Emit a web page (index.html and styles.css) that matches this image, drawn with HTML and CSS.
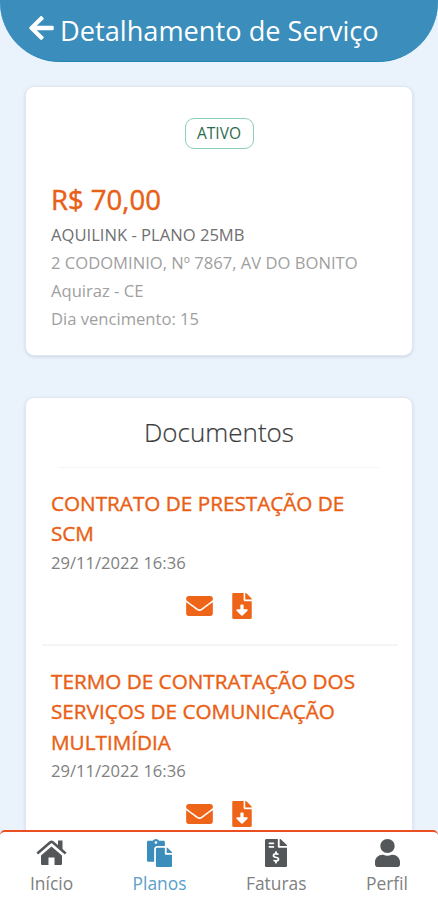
FILE: index.html
```html
<!DOCTYPE html>
<html lang="pt-BR">
<head>
  <meta charset="UTF-8">
  <meta name="viewport" content="width=device-width, initial-scale=1.0">
  <title>Detalhamento de Serviço</title>
  <link rel="stylesheet" href="styles.css">
</head>
<body>
  <header class="topbar">
    <svg class="back" viewBox="0 0 448 512"><path d="M257.500 445.100l-22.200 22.200c-9.400 9.400-24.600 9.400-33.900 0L7 273c-9.400-9.400-9.400-24.600 0-33.900L201.400 44.700c9.400-9.400 24.600-9.400 33.900 0l22.200 22.200c9.500 9.500 9.300 25-.4 34.300L136.600 216H424c13.300 0 24 10.700 24 24v32c0 13.300-10.700 24-24 24H136.600l120.500 114.800c9.800 9.300 10 24.800.4 34.300z"/></svg>
    <h1>Detalhamento de Serviço</h1>
  </header>

  <main class="content">
    <section class="card plan">
      <span class="badge">ATIVO</span>
      <h2 class="price">R$ 70,00</h2>
      <p class="plan-name">AQUILINK - PLANO 25MB</p>
      <p>2 CODOMINIO, Nº 7867, AV DO BONITO</p>
      <p>Aquiraz - CE</p>
      <p>Dia vencimento: 15</p>
    </section>

    <section class="card docs">
      <h2 class="docs-title">Documentos</h2>
      <article class="doc">
        <h3>CONTRATO DE PRESTAÇÃO DE SCM</h3>
        <time>29/11/2022 16:36</time>
        <div class="actions">
          <svg class="mail" viewBox="0 0 512 384"><path d="M502.300 126.800c3.900-3.100 9.700-.2 9.700 4.700V336c0 26.500-21.500 48-48 48H48c-26.500 0-48-21.500-48-48V131.600c0-5 5.700-7.800 9.700-4.700 22.400 17.400 52.100 39.500 154.100 113.600 21.100 15.400 56.700 47.800 92.200 47.600 35.700.3 72-32.800 92.300-47.600 102-74.100 131.600-96.300 154-113.700zM256 256c23.200.4 56.600-29.200 73.400-41.400 132.700-96.300 142.800-104.700 173.400-128.700 5.800-4.500 9.200-11.500 9.200-18.900V48c0-26.500-21.500-48-48-48H48C21.500 0 0 21.500 0 48v19c0 7.400 3.400 14.300 9.200 18.900 30.600 23.900 40.700 32.400 173.400 128.700 16.800 12.200 50.200 41.800 73.400 41.400z"/></svg>
          <svg class="download" viewBox="0 0 384 512"><path d="M224 136V0H24C10.700 0 0 10.700 0 24v464c0 13.300 10.700 24 24 24h336c13.300 0 24-10.700 24-24V160H248c-13.200 0-24-10.800-24-24zm76.450 211.360l-96.420 95.700c-6.650 6.610-17.390 6.610-24.040 0l-96.420-95.700C73.420 337.290 80.540 320 94.820 320H160v-80c0-8.840 7.160-16 16-16h32c8.840 0 16 7.160 16 16v80h65.180c14.280 0 21.400 17.290 11.270 27.360zM377 105L279.100 7c-4.500-4.500-10.600-7-17-7H256v128h128v-6.100c0-6.300-2.500-12.400-7-16.900z"/></svg>
        </div>
      </article>
      <article class="doc">
        <h3>TERMO DE CONTRATAÇÃO DOS SERVIÇOS DE COMUNICAÇÃO MULTIMÍDIA</h3>
        <time>29/11/2022 16:36</time>
        <div class="actions">
          <svg class="mail" viewBox="0 0 512 384"><path d="M502.300 126.800c3.900-3.100 9.700-.2 9.700 4.700V336c0 26.500-21.500 48-48 48H48c-26.500 0-48-21.500-48-48V131.600c0-5 5.700-7.800 9.700-4.700 22.400 17.400 52.100 39.500 154.100 113.600 21.100 15.400 56.700 47.800 92.200 47.600 35.700.3 72-32.800 92.300-47.600 102-74.100 131.600-96.300 154-113.700zM256 256c23.200.4 56.600-29.200 73.400-41.400 132.700-96.300 142.800-104.700 173.400-128.700 5.800-4.500 9.200-11.500 9.200-18.900V48c0-26.500-21.500-48-48-48H48C21.500 0 0 21.500 0 48v19c0 7.400 3.400 14.300 9.200 18.900 30.600 23.900 40.700 32.400 173.400 128.700 16.800 12.200 50.200 41.800 73.400 41.400z"/></svg>
          <svg class="download" viewBox="0 0 384 512"><path d="M224 136V0H24C10.700 0 0 10.700 0 24v464c0 13.300 10.700 24 24 24h336c13.300 0 24-10.700 24-24V160H248c-13.200 0-24-10.800-24-24zm76.450 211.360l-96.420 95.700c-6.650 6.610-17.390 6.610-24.040 0l-96.420-95.700C73.420 337.290 80.540 320 94.820 320H160v-80c0-8.840 7.160-16 16-16h32c8.840 0 16 7.160 16 16v80h65.180c14.280 0 21.400 17.290 11.270 27.360zM377 105L279.100 7c-4.500-4.500-10.600-7-17-7H256v128h128v-6.100c0-6.300-2.500-12.400-7-16.900z"/></svg>
        </div>
      </article>
    </section>
  </main>

  <nav class="tabbar">
    <a class="tab">
      <svg width="31" height="28" viewBox="0 0 31 28"><path d="M15.500 7.500L26 16.500V25a1 1 0 0 1-1 1h-6.500v-7.500h-6V26H6a1 1 0 0 1-1-1v-8.500z"/><path d="M1.300 14.500L14.300 3.300q1.200-1 2.400 0L29.700 14.500" fill="none" stroke="currentColor" stroke-width="2.600"/><path d="M22 1.500h4.500V11L22 7z"/></svg>
      <span>Início</span>
    </a>
    <a class="tab active">
      <svg width="25" height="28" viewBox="0 0 448 512" preserveAspectRatio="none"><path d="M128 184c0-30.900 25.100-56 56-56h136V56c0-13.300-10.700-24-24-24h-80.600C204.300 12.900 183.600 0 160 0s-44.300 12.900-55.400 32H24C10.700 32 0 42.700 0 56v336c0 13.300 10.700 24 24 24h104V184zm32-144c13.300 0 24 10.700 24 24s-10.700 24-24 24-24-10.700-24-24 10.700-24 24-24zm184 248h104v200c0 13.300-10.700 24-24 24H184c-13.300 0-24-10.700-24-24V184c0-13.300 10.700-24 24-24h136v104c0 13.200 10.800 24 24 24zm104-38.100v6.100h-96v-96h6.100c6.400 0 12.500 2.500 17 7l65.900 65.900c4.500 4.500 7 10.600 7 17z"/></svg>
      <span>Planos</span>
    </a>
    <a class="tab">
      <svg width="22" height="28" viewBox="0 0 384 512" preserveAspectRatio="none"><path d="M377 105L279.100 7c-4.500-4.500-10.600-7-17-7H256v128h128v-6.100c0-6.300-2.500-12.400-7-16.900zm-153 31V0H24C10.700 0 0 10.700 0 24v464c0 13.300 10.700 24 24 24h336c13.300 0 24-10.700 24-24V160H248c-13.200 0-24-10.800-24-24zM64 72c0-4.400 3.600-8 8-8h80c4.400 0 8 3.600 8 8v16c0 4.400-3.600 8-8 8H72c-4.400 0-8-3.600-8-8V72zm0 80v-16c0-4.400 3.600-8 8-8h80c4.400 0 8 3.600 8 8v16c0 4.400-3.600 8-8 8H72c-4.400 0-8-3.600-8-8zm144 263.900V440c0 4.400-3.600 8-8 8h-16c-4.400 0-8-3.600-8-8v-24.300c-11.300-.6-22.300-4.500-31.400-11.300-3.900-2.900-4.100-8.800-.6-12.100l11.800-11.200c2.800-2.600 6.900-2.800 10.100-.7 3.900 2.400 8.300 3.700 12.800 3.700h28.100c6.500 0 11.800-5.900 11.800-13.200 0-6-3.600-11.200-8.800-12.700l-45-13.500c-18.600-5.600-31.600-23.400-31.600-43.400 0-24.500 19.100-44.400 42.700-45.100V232c0-4.400 3.600-8 8-8h16c4.400 0 8 3.600 8 8v24.300c11.300.6 22.300 4.500 31.400 11.300 3.900 2.900 4.100 8.800.6 12.100l-11.800 11.200c-2.800 2.600-6.900 2.800-10.100.7-3.900-2.400-8.300-3.700-12.800-3.700h-28.100c-6.500 0-11.800 5.900-11.800 13.200 0 6 3.600 11.200 8.800 12.700l45 13.500c18.600 5.600 31.600 23.400 31.600 43.400 0 24.500-19 44.400-42.700 45.100z"/></svg>
      <span>Faturas</span>
    </a>
    <a class="tab">
      <svg width="25" height="28" viewBox="0 0 448 512" preserveAspectRatio="none"><path d="M224 256c70.700 0 128-57.300 128-128S294.700 0 224 0 96 57.300 96 128s57.300 128 128 128zm89.600 32h-16.700c-22.200 10.200-46.900 16-72.900 16s-50.600-5.800-72.900-16h-16.700C60.200 288 0 348.200 0 422.400V464c0 26.500 21.500 48 48 48h352c26.500 0 48-21.500 48-48v-41.600c0-74.200-60.200-134.400-134.400-134.400z"/></svg>
      <span>Perfil</span>
    </a>
  </nav>
</body>
</html>
```
FILE: styles.css
```css
* {
  box-sizing: border-box;
  margin: 0;
}
body {
  height: 100vh;
  overflow: hidden;
  background: #eaf2fc;
  color: #a0a0a0;
  font-family: 'Open Sans', 'Noto Sans', sans-serif;
  font-size: 16.6px;
}
svg {
  display: block;
  flex-shrink: 0;
  fill: currentColor;
}
.topbar {
  display: flex;
  height: 62px;
  padding: 0 29px;
  background: #3b8dbc;
  border-bottom: 1px solid #2585b5;
  border-radius: 0 0 60px 60px;
  color: #fff;
}
.back {
  width: 25px;
  height: 28px;
  margin: 14px 6px 0 0;
}
h1 {
  font-size: 27.2px;
  font-weight: 400;
  line-height: 61px;
  white-space: nowrap;
}
.content {
  padding: 24px 25px 0;
}
.card {
  background: #fff;
  border: 1px solid #e1e8f0;
  border-radius: 9px;
  box-shadow: 0 1px 3px rgba(60, 90, 110, 0.18);
}
.plan {
  display: flex;
  flex-direction: column;
  height: 270px;
  margin-bottom: 41px;
  padding: 31px 25px 0;
  line-height: 28px;
}
.badge {
  align-self: center;
  width: 69px;
  height: 31px;
  border: 1px solid #8ccfb2;
  border-radius: 9px;
  color: #2b6b4d;
  font-size: 15.5px;
  line-height: 29px;
  text-align: center;
}
.price {
  margin: 32px 0 2px;
  color: #ea5f16;
  font-size: 27.5px;
  font-weight: 400;
  line-height: 38px;
  -webkit-text-stroke: 0.5px;
}
.plan-name {
  color: #707070;
}
.docs {
  height: 480px;
}
.docs-title {
  height: 70px;
  margin: 0 33px;
  border-bottom: 1px solid #f4f4f4;
  color: #3c3d40;
  font-size: 26px;
  font-weight: 300;
  line-height: 69px;
  text-align: center;
  -webkit-text-stroke: 0.2px;
}
.doc {
  margin: 0 14px 0 16px;
  padding: 20px 9px 25px;
  border-bottom: 2px solid #f5f5f5;
}
h3 {
  color: #ea5f16;
  font-size: 20.7px;
  font-weight: 400;
  line-height: 30.400px;
  -webkit-text-stroke: 0.4px;
}
time {
  display: block;
  color: #808080;
  line-height: 28px;
}
.actions {
  display: flex;
  align-items: center;
  justify-content: center;
  gap: 19px;
  height: 26px;
  margin: 16px 2px 0 0;
  color: #ee6519;
}
.mail {
  width: 27px;
  height: 20px;
}
.download {
  width: 20px;
  height: 26px;
}
.tabbar {
  position: fixed;
  right: 0;
  bottom: 0;
  left: 0;
  display: flex;
  justify-content: space-between;
  height: 70px;
  padding: 7px 30px 0;
  background: #fff;
  border-top: 2px solid #e94f20;
  border-radius: 5px 5px 0 0;
}
.tab {
  display: flex;
  flex-direction: column;
  align-items: center;
  color: #54575a;
}
.tab span {
  color: #808080;
  font-size: 17.4px;
  line-height: 33px;
}
.tab.active {
  color: #3b8dbc;
}
.tab.active span {
  color: #5aa0cb;
}
```
